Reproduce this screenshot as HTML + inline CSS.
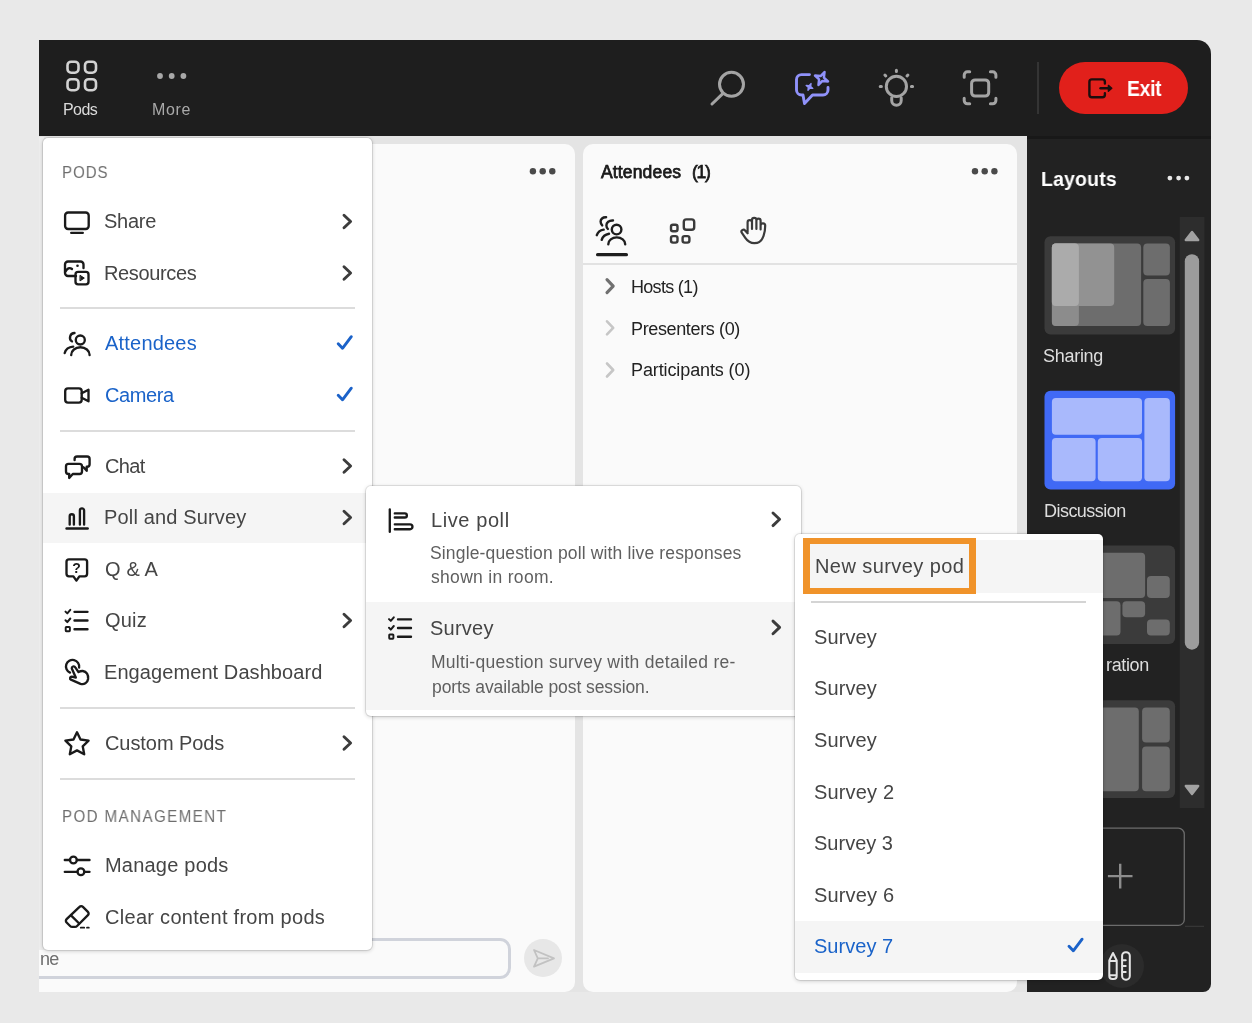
<!DOCTYPE html>
<html>
<head>
<meta charset="utf-8">
<style>
*{box-sizing:border-box;margin:0;padding:0}
html,body{width:1252px;height:1023px;overflow:hidden;background:#e9e9e9;font-family:"Liberation Sans",sans-serif;}
.a{position:absolute}
.t,.d,.hdr{will-change:transform}
.t{position:absolute;white-space:nowrap;line-height:24px;font-size:20px;color:#454545;transform-origin:0 50%}
.b{color:#1a63c9}
.menu{position:absolute;background:#fff;border-radius:5px;box-shadow:0 1px 4px rgba(0,0,0,.20),0 0 0 1px rgba(0,0,0,.09)}
.sep{position:absolute;height:2px;background:#dcdcdc}
.hdr{position:absolute;font-size:16.5px;letter-spacing:1.1px;color:#6e6e6e;line-height:20px;white-space:nowrap;transform-origin:0 50%}
.d{position:absolute;white-space:nowrap;line-height:22px;font-size:17px;color:#5f5f5f;transform-origin:0 50%}
svg{position:absolute;left:0;top:0;overflow:visible}
</style>
</head>
<body>
<div class="a" style="left:39px;top:40px;width:1172px;height:952px;background:#e4e4e4;border-radius:0 14px 8px 0;overflow:hidden">
<div class="a" style="left:0;top:0;width:1172px;height:96px;background:#1e1e1e"></div>
<div class="a" style="left:-20px;top:104px;width:556px;height:848px;background:#fafafa;border-radius:10px"></div>
<div class="a" style="left:544px;top:104px;width:434px;height:848px;background:#fafafa;border-radius:10px"></div>
<div class="a" style="left:988px;top:96px;width:184px;height:856px;background:#222;border-top:3px solid #181818"></div>
</div>
<svg width="1252" height="140" viewBox="0 0 1252 140" fill="none" stroke="#a4a4a4" stroke-width="3" stroke-linecap="round" stroke-linejoin="round">
  <g stroke="#d2d2d2" stroke-width="2.6">
    <rect x="67.5" y="61.7" width="11" height="11" rx="3.6"/><rect x="85" y="61.7" width="11" height="11" rx="3.6"/>
    <rect x="67.5" y="79.200" width="11" height="11" rx="3.6"/><rect x="85" y="79.200" width="11" height="11" rx="3.6"/>
  </g>
  <g fill="#a8a8a8" stroke="none"><circle cx="160" cy="76" r="2.9"/><circle cx="171.700" cy="76" r="2.9"/><circle cx="183.400" cy="76" r="2.9"/></g>
  <circle cx="731.5" cy="84.3" r="12"/><path d="M722.8 93.6 L712 104"/>
  <g stroke="#9092fa" stroke-width="2.9">
    <path d="M809.5 74.600 H801.5 a5 5 0 0 0 -5 5 V90 a5 5 0 0 0 5 5 h1.500 l1.500 8.500 l8 -8.500 h10.500 a5 5 0 0 0 5 -5 v-2.500"/>
    <path d="M824.5 72.0 L823.9 77.6 L828.0 81.5 L822.4 80.9 L818.5 85.0 L819.1 79.4 L815.0 75.5 L820.6 76.1 z" stroke-width="2.5"/>
    <path d="M811.0 83.6 L810.7 86.5 L812.8 88.4 L809.9 88.1 L808.0 90.2 L808.3 87.3 L806.2 85.4 L809.1 85.7 z" fill="#9092fa" stroke-width="1.4"/>
  </g>
  <circle cx="896.400" cy="86.400" r="10.100"/>
  <path d="M891.700 97.800 v2.800 a4.750 4.750 0 0 0 9.500 0 v-2.800"/>
  <path d="M896.400 70.200 v1.200 M884.900 75 l.900 1 M907.900 75 l-.900 1 M880.200 86.400 h1.200 M911.400 86.400 h1.200"/>
  <path d="M964.200 77.300 V75 a3.200 3.200 0 0 1 3.200 -3.200 h2.300 M990.400 71.800 h2.300 a3.200 3.200 0 0 1 3.200 3.200 v2.300 M995.900 98.300 v2.300 a3.200 3.200 0 0 1 -3.200 3.200 h-2.300 M969.700 103.800 h-2.300 a3.200 3.200 0 0 1 -3.200 -3.200 v-2.300"/>
  <rect x="971.600" y="79.900" width="17.100" height="16.200" rx="3.500"/>
  <rect x="1037" y="62" width="2" height="52" fill="#343434" stroke="none"/>
  <rect x="1059" y="62" width="129" height="52" rx="26" fill="#e1201b" stroke="none"/>
  <g stroke="#1c0d0d" stroke-width="2.400">
    <path d="M1104.900 83.500 V81.900 a2.500 2.500 0 0 0 -2.500 -2.500 H1091.900 a2.500 2.500 0 0 0 -2.500 2.500 V94.800 a2.500 2.500 0 0 0 2.500 2.500 H1102.400 a2.500 2.500 0 0 0 2.500 -2.500 v-1.600"/>
    <path d="M1100.500 88.300 H1109.500"/><path d="M1108.400 85.400 l3.400 2.900 -3.400 2.900 z" fill="#1c0d0d" stroke-width="1.400"/>
  </g>
</svg>
<div class="t" style="left:63.0px;top:99.7px;font-size:16px;line-height:20px;letter-spacing:-0.57px;color:#dadada">Pods</div>
<div class="t" style="left:151.6px;top:99.7px;font-size:16px;line-height:20px;letter-spacing:0.67px;color:#a9a9a9">More</div>
<div class="t" style="left:1126.8px;top:76.5px;font-size:21.5px;font-weight:bold;color:#fff;letter-spacing:-0.30px;transform:scaleX(0.9)">Exit</div>
<div class="t" style="-webkit-text-stroke:.75px #1a1a1a;left:601.4px;top:160.2px;font-size:17.5px;letter-spacing:0.15px;color:#1a1a1a;font-weight:normal">Attendees</div>
<div class="t" style="-webkit-text-stroke:.75px #1a1a1a;left:692.4px;top:160.2px;font-size:17.5px;letter-spacing:-1.30px;color:#1a1a1a;font-weight:normal">(1)</div>
<div class="t" style="left:630.9px;top:275.1px;font-size:18px;letter-spacing:-0.70px;color:#222;font-weight:normal">Hosts (1)</div>
<div class="t" style="left:630.9px;top:316.9px;font-size:18px;letter-spacing:-0.36px;color:#222;font-weight:normal">Presenters (0)</div>
<div class="t" style="left:630.9px;top:358.4px;font-size:18px;letter-spacing:-0.11px;color:#222;font-weight:normal">Participants (0)</div>
<div class="a" style="left:583px;top:263px;width:434px;height:2px;background:#e2e2e2"></div>
<div class="a" style="left:20px;top:938.200px;width:491px;height:40.800px;border:3px solid #d0d3db;border-radius:11px;background:#fafafa"></div>
<div class="a" style="left:0;top:930px;width:39px;height:60px;background:#e9e9e9"></div>
<div class="t" style="left:40.3px;top:947.3px;font-size:18px;letter-spacing:-0.80px;color:#6e6e6e;font-weight:normal">ne</div>
<div class="a" style="left:524px;top:939.300px;width:38px;height:38px;border-radius:19px;background:#e7e7e7"></div>
<svg width="1252" height="1023" viewBox="0 0 1252 1023" fill="none" stroke-linecap="round" stroke-linejoin="round">
<circle cx="532.9" cy="171.200" r="3.200" fill="#4a4a4a" stroke="none"/>
<circle cx="542.7" cy="171.200" r="3.200" fill="#4a4a4a" stroke="none"/>
<circle cx="552.3" cy="171.200" r="3.200" fill="#4a4a4a" stroke="none"/>
<circle cx="975.0" cy="171.200" r="3.200" fill="#4a4a4a" stroke="none"/>
<circle cx="984.7" cy="171.200" r="3.200" fill="#4a4a4a" stroke="none"/>
<circle cx="994.4" cy="171.200" r="3.200" fill="#4a4a4a" stroke="none"/>
<path d="M534 950 L554 958.300 L534 966.600 L537.800 958.300 Z M537.800 958.300 H548" stroke="#c2c2c2" stroke-width="1.800"/>
<g stroke="#1e1e1e" stroke-width="2.400"><circle cx="616.600" cy="229.600" r="4.800"/><path d="M608.300 244.200 a8.450 6.800 0 0 1 16.900 0"/><path d="M613 220.500 c-4 -.3 -6.600 2.200 -6.600 4.700 c0 1.600 .5 2.800 1.500 3.800"/><path d="M606.100 217.300 c-3.500 -.2 -5.500 1.900 -5.500 4.300 c0 1.500 .5 2.700 1.600 3.800"/><path d="M601.700 239.800 c1 -3.300 3.500 -5.400 7.300 -6.100"/><path d="M596.800 235.200 c1 -3.100 3.300 -5 6.900 -5.600"/></g>
<rect x="596" y="253" width="32" height="3.300" rx="1.600" fill="#1e1e1e" stroke="none"/>
<g stroke="#3a3a3a" stroke-width="2.400"><rect x="683.800" y="219.400" width="10.400" height="10.400" rx="2.600"/><rect x="671" y="224.800" width="6.500" height="6.500" rx="2"/><rect x="671" y="236.100" width="6.500" height="6.500" rx="2"/><rect x="682.600" y="236.100" width="6.800" height="6.500" rx="2"/></g>
<g stroke="#3a3a3a" stroke-width="2.200"><path d="M747.600 232.300 V222.300 a2.200 2.200 0 0 1 4.400 0 V229 M752 222.300 V220 a2.200 2.200 0 0 1 4.400 0 V229 M756.400 221 v-.300 a2.100 2.100 0 0 1 4.200 0 V229.500 M760.600 225.500 a2.300 2.300 0 0 1 4.600 .2 c0 4 -.6 7.400 -1.700 10.300 c-1.500 4.400 -4.800 7.200 -9.200 7.200 c-3.800 0 -6.700 -1.900 -9 -5.300 l-3.400 -5 a2 2 0 0 1 3.200 -2.400 l2.500 2.800"/></g>
<path d="M607 279.6 l6.200 6.500 -6.200 6.500" stroke="#707070" stroke-width="3.1"/>
<path d="M607 321.3 l6.200 6.500 -6.200 6.500" stroke="#c6c6c6" stroke-width="2.6"/>
<path d="M607 363.5 l6.200 6.500 -6.200 6.500" stroke="#c6c6c6" stroke-width="2.6"/>
</svg>
<div class="t" style="left:1040.8px;top:166.6px;font-size:20.5px;letter-spacing:0.17px;color:#fff;font-weight:bold;transform:scaleX(0.95);">Layouts</div>
<div class="t" style="left:1043.1px;top:344.1px;font-size:18px;letter-spacing:-0.28px;color:#dedede;font-weight:normal">Sharing</div>
<div class="t" style="left:1044.1px;top:498.6px;font-size:18px;letter-spacing:-0.54px;color:#dedede;font-weight:normal">Discussion</div>
<div class="t" style="left:1105.5px;top:653.3px;font-size:18px;letter-spacing:-0.36px;color:#dedede;font-weight:normal">ration</div>
<svg width="1252" height="1023" viewBox="0 0 1252 1023" fill="none">
<circle cx="1169.9" cy="178.100" r="2.400" fill="#e8e8e8"/>
<circle cx="1178.6" cy="178.100" r="2.400" fill="#e8e8e8"/>
<circle cx="1186.9" cy="178.100" r="2.400" fill="#e8e8e8"/>
<rect x="1179.800" y="217" width="24.600" height="591" fill="#2d2d2d"/>
<rect x="1184.800" y="254.200" width="14.300" height="395.500" rx="7.100" fill="#9c9c9c"/>
<path d="M1192 232 L1198.200 240 H1185.800 Z" fill="#a2a2a2" stroke="#a2a2a2" stroke-width="2.400" stroke-linejoin="round"/>
<path d="M1192 794 L1198.200 786 H1185.800 Z" fill="#a2a2a2" stroke="#a2a2a2" stroke-width="2.400" stroke-linejoin="round"/>
<rect x="1044.500" y="236.200" width="130.600" height="98.300" rx="6" fill="#3b3b3b"/>
<rect x="1051.900" y="243.600" width="89.200" height="82.500" rx="4" fill="#6d6d6d"/>
<rect x="1051.900" y="243.600" width="27" height="82.500" rx="4" fill="#8c8c8c"/>
<rect x="1051.900" y="243.600" width="62.300" height="62.300" rx="4" fill="#929292"/>
<rect x="1051.900" y="243.600" width="27" height="62.300" rx="4" fill="#ababab"/>
<rect x="1143.300" y="243.600" width="26.600" height="32" rx="4" fill="#6d6d6d"/>
<rect x="1143.300" y="278.900" width="26.600" height="47.200" rx="4" fill="#6d6d6d"/>
<rect x="1044.500" y="390.800" width="130.600" height="98.800" rx="6" fill="#4069f5"/>
<rect x="1051.900" y="398" width="90.100" height="36.800" rx="4" fill="#a9b9fc"/>
<rect x="1051.900" y="438.100" width="43.700" height="43.100" rx="4" fill="#a9b9fc"/>
<rect x="1097.800" y="438.100" width="44.200" height="43.100" rx="4" fill="#a9b9fc"/>
<rect x="1144.400" y="398" width="25.500" height="83.200" rx="4" fill="#a9b9fc"/>
<rect x="1044.500" y="545.400" width="130.600" height="98.600" rx="6" fill="#3b3b3b"/>
<rect x="1051.900" y="552.800" width="93.200" height="45.200" rx="4" fill="#6d6d6d"/>
<rect x="1147" y="576.100" width="22.800" height="21.900" rx="4" fill="#6d6d6d"/>
<rect x="1051.900" y="601.300" width="68.600" height="34.200" rx="4" fill="#6d6d6d"/>
<rect x="1122.400" y="601.300" width="22.700" height="15.900" rx="4" fill="#6d6d6d"/>
<rect x="1147" y="619.400" width="22.800" height="16.100" rx="4" fill="#6d6d6d"/>
<rect x="1044.500" y="700.200" width="130.600" height="97.800" rx="6" fill="#3b3b3b"/>
<rect x="1051.900" y="707.600" width="86.900" height="83.600" rx="4" fill="#6d6d6d"/>
<rect x="1142.100" y="707.600" width="27.700" height="34.800" rx="4" fill="#6d6d6d"/>
<rect x="1142.100" y="746.500" width="27.700" height="44.700" rx="4" fill="#6d6d6d"/>
<rect x="1044.500" y="828.200" width="139.800" height="97.200" rx="6" fill="none" stroke="#6c6c6c" stroke-width="1.300"/>
<path d="M1120.200 863.800 v24.600 M1107.900 876.100 h24.600" stroke="#8c8c8c" stroke-width="2.400"/>
<path d="M1185 926.300 h19" stroke="#3c3c3c" stroke-width="1"/>
<circle cx="1122" cy="966" r="22" fill="#2b2b2b"/>
<g fill="none" stroke="#e4e4e4" stroke-width="2" stroke-linejoin="round" stroke-linecap="round"><path d="M1109.300 960.500 l3.700 -7.500 3.700 7.500 V976 a3 3 0 0 1 -3 3 h-1.400 a3 3 0 0 1 -3 -3 z M1109.300 961 h7.400 M1109.300 975.300 h7.400"/><rect x="1122.100" y="952.200" width="7.700" height="27.500" rx="3.600"/><path d="M1122.500 960.200 h3.200 M1122.500 966.100 h3.200 M1122.500 972 h3.200"/></g>
</svg>
<div class="a" style="left:39px;top:137px;width:5px;height:813px;background:#eeeeee"></div>
<div class="menu" style="left:43px;top:137.500px;width:329px;height:812.500px"></div>
<div class="a" style="left:43px;top:492.5px;width:329px;height:50px;background:#f5f5f5"></div>
<div class="sep" style="left:60px;top:307px;width:295px"></div>
<div class="sep" style="left:60px;top:430px;width:295px"></div>
<div class="sep" style="left:60px;top:707px;width:295px"></div>
<div class="sep" style="left:60px;top:778px;width:295px"></div>
<div class="hdr" style="left:62.2px;top:161.7px;font-size:16.5px;letter-spacing:0.90px;transform:scaleX(0.92)">PODS</div>
<div class="hdr" style="left:62.2px;top:805.7px;font-size:16.5px;letter-spacing:1.50px;transform:scaleX(0.92)">POD MANAGEMENT</div>
<div class="t" style="left:103.7px;top:209.3px;letter-spacing:-0.25px">Share</div>
<div class="t" style="left:104.3px;top:260.8px;letter-spacing:-0.35px">Resources</div>
<div class="t b" style="left:104.5px;top:331.3px;letter-spacing:0.20px">Attendees</div>
<div class="t b" style="left:104.7px;top:382.8px;letter-spacing:-0.42px">Camera</div>
<div class="t" style="left:104.8px;top:453.8px;letter-spacing:-0.67px">Chat</div>
<div class="t" style="left:104.3px;top:505.3px;letter-spacing:0.16px">Poll and Survey</div>
<div class="t" style="left:104.8px;top:556.8px;letter-spacing:0.17px">Q &amp; A</div>
<div class="t" style="left:104.8px;top:608.3px;letter-spacing:0.17px">Quiz</div>
<div class="t" style="left:104.3px;top:659.8px;letter-spacing:0.08px">Engagement Dashboard</div>
<div class="t" style="left:104.8px;top:730.8px;letter-spacing:-0.07px">Custom Pods</div>
<div class="t" style="left:104.5px;top:852.8px;letter-spacing:0.21px">Manage pods</div>
<div class="t" style="left:104.8px;top:904.8px;letter-spacing:0.29px">Clear content from pods</div>
<svg width="1252" height="1023" viewBox="0 0 1252 1023" fill="none" stroke="#1a1a1a" stroke-width="2.350" stroke-linecap="round" stroke-linejoin="round">
<rect x="65.1" y="212.5" width="23.600" height="16.500" rx="3"/><path d="M71.200 232.800 h11.600"/>
<path d="M76 276 H68 a3 3 0 0 1 -3 -3 V264.500 a3 3 0 0 1 3 -3 H80.500 a3 3 0 0 1 3 3 V268"/><path d="M65.500 271.500 c1.500 -3 4 -4.500 6.500 -2.500"/><circle cx="77.500" cy="265.700" r="1.300" fill="#1a1a1a" stroke="none"/><rect x="75.500" y="271.800" width="13" height="12.600" rx="2.600"/><path d="M80.300 275.500 l4 2.600 -4 2.600 z" fill="#1a1a1a" stroke-width="1"/>
<circle cx="80.300" cy="340" r="4.500"/><path d="M71.200 355 a9.200 7.800 0 0 1 18.400 0"/><path d="M74.500 333 a4.600 4.600 0 0 0 -2.500 8.400"/><path d="M64.700 353 c1 -3.500 4 -6 8.500 -6.300"/>
<rect x="65.200" y="388.400" width="16.500" height="14.200" rx="2.800"/><path d="M81.700 393.300 l6.800 -3.600 v11.600 l-6.800 -3.600"/>
<path d="M68.500 463.800 h11 a2.500 2.500 0 0 1 2.500 2.500 v5.200 a2.500 2.500 0 0 1 -2.500 2.500 h-6.700 l-3.600 4 v-4 h-.7 a2.500 2.500 0 0 1 -2.500 -2.500 v-5.200 a2.500 2.500 0 0 1 2.500 -2.500 z"/><path d="M74.600 460 v-1 a2.500 2.500 0 0 1 2.500 -2.500 h10 a2.500 2.500 0 0 1 2.500 2.500 v5.200 a2.500 2.500 0 0 1 -2.500 2.500 h-.4 v4 l-3.200 -3.400"/>
<path d="M66.500 528.500 h21.200"/><path d="M69.700 524.500 v-8.200 a2.100 2.100 0 0 1 4.200 0 v8.200"/><path d="M79.900 524.500 v-14 a2.100 2.100 0 0 1 4.200 0 v14"/>
<path d="M69 559.300 h15.600 a2.500 2.500 0 0 1 2.500 2.500 v12 a2.500 2.500 0 0 1 -2.500 2.500 h-5.200 l-3 4.300 -3 -4.300 H69 a2.500 2.500 0 0 1 -2.500 -2.500 v-12 a2.500 2.500 0 0 1 2.500 -2.500 z"/>
<path d="M74.500 611.800 h13 M74.500 620.500 h13 M74.500 629.200 h13"/><path d="M65.500 611.600 l1.800 1.800 3 -3.600 M65.500 620.300 l1.800 1.800 3 -3.600" stroke-width="2"/><rect x="65.700" y="627" width="4.200" height="4.200" rx=".6" stroke-width="1.900"/>
<path d="M79.100 667.500 A6.600 6.600 0 1 0 70 672.600"/><path d="M75.300 667.300 a1.900 1.900 0 0 0 -3.500 1.300 L75.800 677.600 L71.800 676.700 a1.600 1.600 0 0 0 -.900 3 L80.500 683.800 c3.500 1.200 7 -.800 7.600 -4.800 c.500 -4 -1.500 -7.600 -5.300 -8 c-1.500 -.100 -3 .300 -4.300 1.100 Z"/>
<path d="M77.0 732.2 L80.5 739.5 L88.6 740.6 L82.7 746.3 L84.2 754.3 L77.0 750.4 L69.8 754.3 L71.3 746.3 L65.4 740.6 L73.5 739.5 z"/>
<path d="M64.800 860 h5 M77 860 h12.500 M64.800 871.800 h12.500 M84.500 871.800 h5"/><circle cx="73.400" cy="860" r="3.400"/><circle cx="80.900" cy="871.800" r="3.400"/>
<path d="M79.500 906.800 a2.400 2.400 0 0 1 3.400 0 l5 5 a2.400 2.400 0 0 1 0 3.400 l-10.800 10.800 a3 3 0 0 1 -2.100 .9 h-2.800 a3 3 0 0 1 -2.100 -.9 l-3.500 -3.500 a2.400 2.400 0 0 1 0 -3.400 z"/><path d="M71 915.300 l8.200 8.200"/><path d="M80.800 927.700 h3.400 M87 927.700 h1.800" stroke-width="1.800"/>
<path d="M344 215.2 l6.600 6.300 -6.600 6.300" stroke="#3c3c3c" stroke-width="2.900"/>
<path d="M344 266.7 l6.600 6.300 -6.600 6.300" stroke="#3c3c3c" stroke-width="2.900"/>
<path d="M338.200 343.7 l4.300 4.600 8.800 -11.600" stroke="#1b62c9" stroke-width="2.900"/>
<path d="M338.200 395.2 l4.300 4.600 8.800 -11.600" stroke="#1b62c9" stroke-width="2.900"/>
<path d="M344 459.7 l6.600 6.300 -6.600 6.300" stroke="#3c3c3c" stroke-width="2.900"/>
<path d="M344 511.2 l6.600 6.300 -6.600 6.300" stroke="#3c3c3c" stroke-width="2.900"/>
<path d="M344 614.2 l6.600 6.300 -6.600 6.300" stroke="#3c3c3c" stroke-width="2.900"/>
<path d="M344 736.7 l6.600 6.300 -6.600 6.300" stroke="#3c3c3c" stroke-width="2.900"/>
</svg>
<div class="a" style="left:70px;top:560px;width:13px;text-align:center;font-size:14px;font-weight:bold;line-height:16px;color:#1a1a1a;will-change:transform">?</div>
<div class="menu" style="left:366px;top:486px;width:435px;height:230px"></div>
<div class="a" style="left:366px;top:601.500px;width:435px;height:108.500px;background:#f5f5f5"></div>
<div class="t" style="left:430.5px;top:507.9px;font-size:20px;letter-spacing:0.59px;">Live poll</div>
<div class="d" style="left:429.9px;top:542.2px;font-size:17.5px;letter-spacing:0.15px;">Single-question poll with live responses</div>
<div class="d" style="left:431.0px;top:566.3px;font-size:17.5px;letter-spacing:0.31px;">shown in room.</div>
<div class="t" style="left:430.0px;top:616.3px;font-size:20px;letter-spacing:0.24px;">Survey</div>
<div class="d" style="left:430.5px;top:650.8px;font-size:17.5px;letter-spacing:0.28px;">Multi-question survey with detailed re-</div>
<div class="d" style="left:431.5px;top:676.0px;font-size:17.5px;letter-spacing:-0.08px;">ports available post session.</div>
<svg width="1252" height="1023" viewBox="0 0 1252 1023" fill="none" stroke="#1a1a1a" stroke-width="2.350" stroke-linecap="round" stroke-linejoin="round">
<path d="M773 513.0 l6.600 6.300 -6.600 6.300" stroke="#3c3c3c" stroke-width="2.900"/>
<path d="M773 621.1 l6.600 6.300 -6.600 6.300" stroke="#3c3c3c" stroke-width="2.900"/>
<path d="M389.800 509.500 v22.200"/><path d="M394.800 513.400 h10 a2.050 2.050 0 0 1 0 4.100 h-10"/><path d="M394.800 524.300 h15.200 a2.450 2.450 0 0 1 0 4.900 h-15.200"/>
<g transform="translate(323.5 7.5)"><path d="M74.500 611.800 h13 M74.500 620.500 h13 M74.500 629.200 h13"/><path d="M65.500 611.600 l1.800 1.800 3 -3.600 M65.500 620.300 l1.800 1.800 3 -3.600" stroke-width="2"/><rect x="65.700" y="627" width="4.200" height="4.200" rx=".6" stroke-width="1.900"/></g>
</svg>
<div class="menu" style="left:795px;top:534px;width:308px;height:445.800px"></div>
<div class="a" style="left:803px;top:540px;width:300px;height:53px;background:#f5f5f5"></div>
<div class="a" style="left:795px;top:921px;width:308px;height:52px;background:#f5f5f5"></div>
<div class="a" style="left:803px;top:538px;width:173px;height:56.400px;border:6.600px solid #f0932a;border-left-width:7px;border-right-width:7px"></div>
<div class="sep" style="left:811px;top:601px;width:275px;background:#d4d4d4"></div>
<div class="t" style="left:814.8px;top:553.6px;font-size:20px;letter-spacing:0.43px;">New survey pod</div>
<div class="t" style="left:814.1px;top:624.7px;font-size:20px;letter-spacing:0.12px;">Survey</div>
<div class="t" style="left:814.1px;top:676.3px;font-size:20px;letter-spacing:0.12px;">Survey</div>
<div class="t" style="left:814.1px;top:727.9px;font-size:20px;letter-spacing:0.12px;">Survey</div>
<div class="t" style="left:814.1px;top:779.5px;font-size:20px;letter-spacing:0.16px;">Survey 2</div>
<div class="t" style="left:814.1px;top:831.1px;font-size:20px;letter-spacing:0.01px;">Survey 3</div>
<div class="t" style="left:814.1px;top:882.7px;font-size:20px;letter-spacing:0.16px;">Survey 6</div>
<div class="t b" style="left:814.1px;top:934.3px;font-size:20px;letter-spacing:0.03px;">Survey 7</div>
<svg width="1252" height="1023" viewBox="0 0 1252 1023" fill="none" stroke="#1b62c9" stroke-width="2.900" stroke-linecap="round" stroke-linejoin="round"><path d="M1069 946.200 l4.300 4.600 8.800 -11.600"/></svg>
</body>
</html>
